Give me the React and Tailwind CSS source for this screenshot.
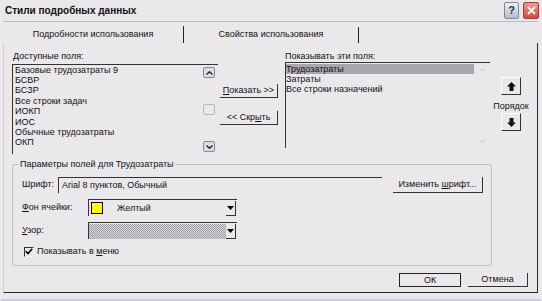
import React from "react";

const available = [
  "Базовые трудозатраты 9",
  "БСВР",
  "БСЗР",
  "Все строки задач",
  "ИОКП",
  "ИОС",
  "Обычные трудозатраты",
  "ОКП",
];

const shown = ["Трудозатраты", "Затраты", "Все строки назначений"];

// подчеркнутая буква-мнемоника
function U({ children }) {
  return <span className="underline underline-offset-1">{children}</span>;
}

function DropArrow() {
  return (
    <div className="ml-auto mr-[1px] w-[10px] h-[15px] border-r border-b border-[#333] flex items-center justify-center">
      <svg width="7" height="4" viewBox="0 0 7 4">
        <polygon points="0,0 7,0 3.5,4" fill="#000" />
      </svg>
    </div>
  );
}

function OrderButton({ down }) {
  return (
    <div className="w-[20px] h-[18px] border-t border-l border-white border-r border-b border-r-[#333] border-b-[#333] flex items-center justify-center">
      <svg width="9" height="9" viewBox="0 0 9 9" className={down ? "rotate-180" : ""}>
        <polygon points="4.5,0 9,4.5 6.5,4.5 6.5,9 2.5,9 2.5,4.5 0,4.5" fill="#111" />
      </svg>
    </div>
  );
}

function ScrollBtn({ children, faint }) {
  return (
    <div
      className={
        "w-[12px] h-[11px] rounded-[2px] border flex items-center justify-center " +
        (faint ? "border-[#b9b6bd] h-[10px]" : "border-[#8a8790] bg-[#dedbe2]")
      }
    >
      {children}
    </div>
  );
}

export default function App() {
  return (
    <div className="w-[542px] h-[301px] overflow-hidden bg-[#ebe8ec] text-[#111] text-[9px] leading-none font-['Liberation_Sans',Arial,sans-serif] flex flex-col">
      {/* заголовок окна */}
      <div className="h-[21px] flex items-center justify-between pl-[5px] pr-[3px]">
        <span className="text-[10px] font-bold">Стили подробных данных</span>
        <div className="flex gap-[4px]">
          <div className="w-[15px] h-[17px] rounded-[2px] border border-[#7d8597] bg-[linear-gradient(#eef0f5,#b7bdcb)] flex items-center justify-center text-[11px] font-bold text-[#2c2f3a]">
            ?
          </div>
          <div className="w-[16px] h-[17px] rounded-[2px] border border-[#9c4338] bg-[linear-gradient(#f29a8c,#d24b3b)] flex items-center justify-center">
            <svg width="9" height="9" viewBox="0 0 9 9">
              <path d="M1 1 L8 8 M8 1 L1 8" stroke="#fff" strokeWidth="1.8" />
            </svg>
          </div>
        </div>
      </div>

      {/* вкладки */}
      <div className="ml-[3px] w-[535px] h-[22px] border-t border-[#bdbac2] flex">
        <div className="w-[181px] flex items-end">
          <div className="flex-1 self-stretch flex items-center justify-center pt-[3px]">
            Подробности использования
          </div>
          <div className="w-px h-[17px] bg-[#222]" />
        </div>
        <div className="w-[175px] flex items-end">
          <div className="flex-1 self-stretch flex items-center justify-center pt-[4px]">
            Свойства использования
          </div>
          <div className="w-px h-[16px] bg-[#222]" />
        </div>
      </div>

      {/* содержимое вкладки */}
      <div className="ml-[3px] w-[535px] h-[250px] border-l border-l-[#d3d0d8] border-r border-r-[#2a2a2a] border-b border-b-[#2a2a2a] pt-[8px] pl-[8px] flex flex-col">
        <div className="flex items-start">
          {/* доступные поля */}
          <div className="w-[206px]">
            <div className="h-[11px] pl-[1px] flex items-center">
              <span>
                <U>Д</U>оступные поля:
              </span>
            </div>
            <div className="mt-[2px] h-[90px] border-t border-l border-[#333] flex">
              <div className="flex-1 pl-[2px]">
                {available.map((f) => (
                  <div key={f} className="h-[10.4px] flex items-center whitespace-nowrap">
                    {f}
                  </div>
                ))}
              </div>
              <div className="w-[12px] mr-[3px] py-[2px] flex flex-col justify-between items-center">
                <ScrollBtn>
                  <svg width="7" height="4" viewBox="0 0 7 4">
                    <path d="M0.5 3.5 L3.5 0.8 L6.5 3.5" stroke="#222" strokeWidth="1.4" fill="none" />
                  </svg>
                </ScrollBtn>
                <ScrollBtn faint />
                <ScrollBtn>
                  <svg width="7" height="4" viewBox="0 0 7 4">
                    <path d="M0.5 0.5 L3.5 3.2 L6.5 0.5" stroke="#222" strokeWidth="1.4" fill="none" />
                  </svg>
                </ScrollBtn>
              </div>
            </div>
          </div>

          {/* кнопки переноса */}
          <div className="ml-[2px] w-[58px] pt-[33px] flex flex-col">
            <div className="h-[14px] border-r border-b border-[#333] flex items-center justify-center">
              <span>
                <U>П</U>оказать &gt;&gt;
              </span>
            </div>
            <div className="mt-[13px] h-[14px] border-r border-b border-[#333] flex items-center justify-center">
              <span>
                &lt;&lt; Скр<U>ы</U>ть
              </span>
            </div>
          </div>

          {/* показывать эти поля */}
          <div className="ml-[7px] w-[205px]">
            <div className="h-[11px] flex items-center">Показывать эти поля:</div>
            <div className="h-[86px] border-t border-l border-[#333] flex">
              <div className="w-[188px] pt-[1px]">
                {shown.map((f, i) => (
                  <div
                    key={f}
                    className={"h-[10px] flex items-center whitespace-nowrap " + (i === 0 ? "bg-[#aaa6af]" : "")}
                  >
                    {f}
                  </div>
                ))}
              </div>
              <div className="flex-1 flex flex-col items-center justify-between pt-[5px] pb-[5px] text-[#c9c6cd]">
                <svg width="7" height="4" viewBox="0 0 7 4">
                  <path d="M0.5 3.5 L3.5 0.8 L6.5 3.5" stroke="currentColor" strokeWidth="1" fill="none" />
                </svg>
                <svg width="7" height="4" viewBox="0 0 7 4">
                  <path d="M0.5 0.5 L3.5 3.2 L6.5 0.5" stroke="currentColor" strokeWidth="1" fill="none" />
                </svg>
              </div>
            </div>
          </div>

          {/* порядок */}
          <div className="ml-[1px] w-[40px] pt-[26px] flex flex-col items-center">
            <OrderButton />
            <div className="mt-[6px] h-[11px] flex items-center">Порядок</div>
            <div className="mt-[1px]">
              <OrderButton down />
            </div>
          </div>
        </div>

        {/* параметры полей */}
        <fieldset className="mt-[5px] w-[480px] border border-[#c6c3ca] rounded-[2px]">
          <legend className="ml-[6px] px-[1px] leading-[11px]">Параметры полей для Трудозатраты</legend>
          <div className="pl-[9px] pb-[8px]">
            <div className="mt-[6px] h-[17px] flex items-center">
              <div className="w-[36px]">Шрифт:</div>
              <div className="w-[324px] h-[16px] border-t border-l border-[#333] flex items-center pl-[3px]">
                Arial 8 пунктов, Обычный
              </div>
              <div className="ml-[11px] w-[90px] h-[16px] border-r border-b border-[#333] flex items-center justify-center">
                <span>
                  Изменить <U>ш</U>рифт...
                </span>
              </div>
            </div>

            <div className="mt-[6px] h-[17px] flex items-center">
              <div className="w-[66px]">
                <U>Ф</U>он ячейки:
              </div>
              <div className="w-[149px] h-[17px] border-t border-l border-[#333] flex items-center">
                <div className="ml-[2px] w-[12px] h-[12px] bg-[#ffff00] border border-black" />
                <span className="ml-[14px]">Желтый</span>
                <DropArrow />
              </div>
            </div>

            <div className="mt-[6px] h-[17px] flex items-center">
              <div className="w-[66px]">
                <U>У</U>зор:
              </div>
              <div className="w-[149px] h-[17px] border-t border-l border-[#333] flex items-center">
                <div className="flex-1 h-[15px] bg-[repeating-conic-gradient(#9e9aa3_0_25%,#dcd9df_0_50%)] bg-[length:2px_2px]" />
                <DropArrow />
              </div>
            </div>

            <div className="mt-[7px] h-[11px] flex items-center">
              <div className="ml-[2px] w-[10px] h-[10px] border border-t-[#333] border-l-[#333] border-r-[#f4f2f5] border-b-[#f4f2f5] flex items-center justify-center">
                <svg width="8" height="7" viewBox="0 0 8 7">
                  <path d="M0.8 3.2 L3 5.6 L7.2 0.8" stroke="#000" strokeWidth="1.6" fill="none" />
                </svg>
              </div>
              <span className="ml-[3px]">
                Показывать в <U>м</U>еню
              </span>
            </div>
          </div>
        </fieldset>

        {/* кнопки диалога */}
        <div className="mt-[7px] flex justify-end gap-[7px] pr-[9px]">
          <div className="w-[62px] h-[14px] border border-[#222] flex items-center justify-center">ОК</div>
          <div className="w-[60px] h-[14px] border-r border-b border-[#333] flex items-center justify-center">
            Отмена
          </div>
        </div>
      </div>

      <div className="flex-1 mx-[1px] border-b-2 border-[#c9cddc]" />
    </div>
  );
}
